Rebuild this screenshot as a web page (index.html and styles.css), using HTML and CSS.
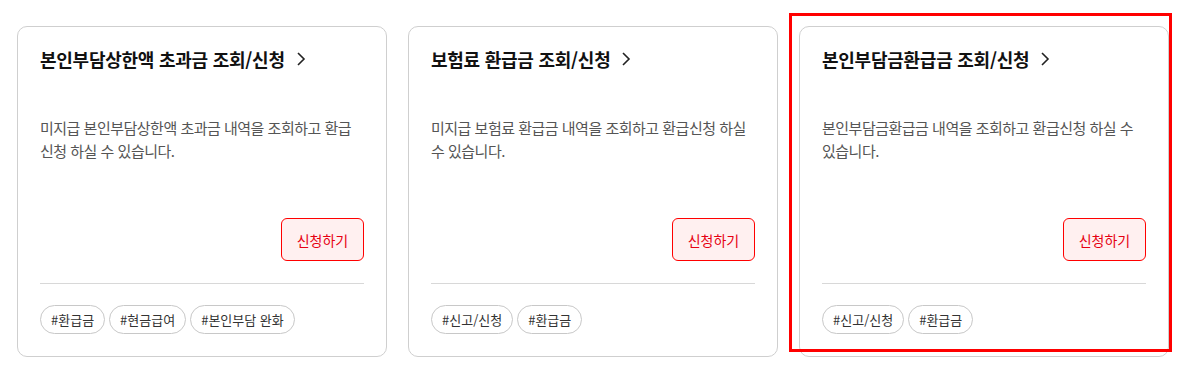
FILE: index.html
```html
<!DOCTYPE html>
<html lang="ko">
<head>
<meta charset="utf-8">
<link rel="stylesheet" href="styles.css">
</head>
<body>
<div class="cards">
  <div class="card">
    <a class="card-title">본인부담상한액 초과금 조회/신청
      <svg class="chev" width="10" height="16" viewBox="0 0 10 16"><path d="M2 2 L8 8 L2 14" fill="none" stroke="#222" stroke-width="1.6"/></svg>
    </a>
    <p class="card-desc">미지급 본인부담상한액 초과금 내역을 조회하고 환급 신청 하실 수 있습니다.</p>
    <div class="card-actions"><button class="btn-apply">신청하기</button></div>
    <div class="card-tags">
      <span class="tag">#환급금</span>
      <span class="tag">#현금급여</span>
      <span class="tag">#본인부담 완화</span>
    </div>
  </div>
  <div class="card">
    <a class="card-title">보험료 환급금 조회/신청
      <svg class="chev" width="10" height="16" viewBox="0 0 10 16"><path d="M2 2 L8 8 L2 14" fill="none" stroke="#222" stroke-width="1.6"/></svg>
    </a>
    <p class="card-desc">미지급 보험료 환급금 내역을 조회하고 환급신청 하실 수 있습니다.</p>
    <div class="card-actions"><button class="btn-apply">신청하기</button></div>
    <div class="card-tags">
      <span class="tag">#신고/신청</span>
      <span class="tag">#환급금</span>
    </div>
  </div>
  <div class="card card-focus">
    <a class="card-title">본인부담금환급금 조회/신청
      <svg class="chev" width="10" height="16" viewBox="0 0 10 16"><path d="M2 2 L8 8 L2 14" fill="none" stroke="#222" stroke-width="1.6"/></svg>
    </a>
    <p class="card-desc">본인부담금환급금 내역을 조회하고 환급신청 하실 수 있습니다.</p>
    <div class="card-actions"><button class="btn-apply">신청하기</button></div>
    <div class="card-tags">
      <span class="tag">#신고/신청</span>
      <span class="tag">#환급금</span>
    </div>
    <div class="focus-box"></div>
  </div>
</div>
</body>
</html>
```

FILE: styles.css
```css
* { box-sizing: border-box; }
body {
  margin: 0;
  background: #fff;
  font-family: "Noto Sans CJK KR", "Noto Sans", sans-serif;
  color: #222;
}
.cards {
  display: flex;
  gap: 21px;
  padding: 26px 0 0 17px;
}
.card {
  position: relative;
  flex: none;
  width: 370px;
  height: 331px;
  border: 1px solid #cfcfcf;
  border-radius: 10px;
  padding: 20px 22px 22px 22px;
  display: flex;
  flex-direction: column;
}
.card-title {
  display: flex;
  align-items: center;
  gap: 11px;
  font-size: 18px;
  font-weight: 700;
  line-height: 24px;
  color: #111;
  text-decoration: none;
  letter-spacing: -0.25px;
}
.chev { flex: none; }
.card-desc {
  margin: 45px 0 0;
  font-size: 15px;
  line-height: 23px;
  color: #555;
  letter-spacing: -0.5px;
  word-break: keep-all;
}
.card-actions {
  margin-top: auto;
  display: flex;
  justify-content: flex-end;
  padding-bottom: 22px;
  border-bottom: 1px solid #d8d8d8;
}
.btn-apply {
  width: 83px;
  height: 43px;
  border: 1px solid #f00;
  border-radius: 6px;
  background: #fff0f0;
  color: #e60012;
  font-family: inherit;
  font-size: 14px;
  padding: 0;
}
.card-tags {
  display: flex;
  gap: 4px;
  margin-top: 21px;
}
.tag {
  height: 29px;
  padding: 0 10px;
  border: 1px solid #c8c8c8;
  border-radius: 15px;
  font-size: 13px;
  line-height: 27px;
  color: #333;
}
.focus-box {
  position: absolute;
  left: -11px;
  top: -14px;
  width: 383px;
  height: 339px;
  border: 3px solid #f00;
  pointer-events: none;
}
```
